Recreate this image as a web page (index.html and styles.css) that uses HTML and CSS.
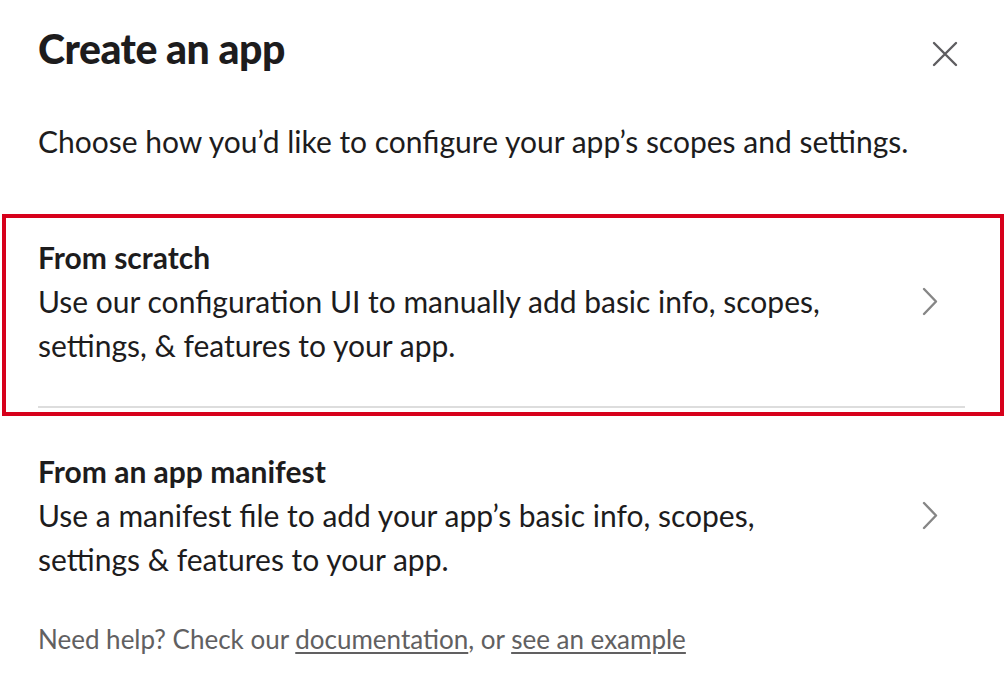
FILE: index.html
```html
<!DOCTYPE html>
<html lang="en">
<head>
<meta charset="utf-8">
<title>Create an app</title>
<link rel="stylesheet" href="styles.css">
</head>
<body>
<div class="modal">
  <header class="modal-header">
    <h1 class="modal-title">Create an app</h1>
    <button class="close-btn" aria-label="Close">
      <svg width="26" height="26" viewBox="0 0 26 26"><path d="M2 2 L24 24 M24 2 L2 24" fill="none" stroke="#5e5d60" stroke-width="2.4" stroke-linecap="round"/></svg>
    </button>
  </header>
  <p class="modal-intro">Choose how you’d like to configure your app’s scopes and settings.</p>

  <div class="option option-focused">
    <div class="option-row">
      <div class="option-text">
        <div class="option-title">From scratch</div>
        <div class="option-desc">Use our configuration UI to manually add basic info, scopes, settings, &amp; features to your app.</div>
      </div>
      <svg class="chevron" width="16" height="29" viewBox="0 0 16 29"><path d="M2 2 L14 14.5 L2 27" fill="none" stroke="#868686" stroke-width="2.4" stroke-linecap="round" stroke-linejoin="round"/></svg>
    </div>
    <div class="divider"></div>
  </div>

  <div class="option">
    <div class="option-row">
      <div class="option-text">
        <div class="option-title">From an app manifest</div>
        <div class="option-desc">Use a manifest file to add your app’s basic info, scopes, settings &amp; features to your app.</div>
      </div>
      <svg class="chevron" width="16" height="29" viewBox="0 0 16 29"><path d="M2 2 L14 14.5 L2 27" fill="none" stroke="#868686" stroke-width="2.4" stroke-linecap="round" stroke-linejoin="round"/></svg>
    </div>
  </div>

  <p class="modal-footer">Need help? Check our <a href="#">documentation</a>, or <a href="#">see an example</a></p>
</div>
</body>
</html>
```
FILE: styles.css
```css
* { box-sizing: border-box; }
html, body { margin: 0; padding: 0; background: #fff; }
body {
  font-family: Lato, "Noto Sans", sans-serif;
  color: #1d1c1d;
  width: 1004px;
  height: 686px;
  overflow: hidden;
}
.modal { padding-top: 24px; }
.modal-header {
  display: flex;
  align-items: center;
  justify-content: space-between;
  padding: 0 46px 0 38px;
}
.modal-title {
  margin: 0;
  font-size: 41px;
  line-height: 50px;
  font-weight: 900;
  letter-spacing: -0.5px;
}
.close-btn {
  border: 0;
  background: none;
  padding: 0;
  width: 26px;
  height: 26px;
  margin-top: 10px;
  display: flex;
}
.modal-intro {
  margin: 45px 0 0;
  padding: 0 39px 0 38px;
  font-size: 30px;
  line-height: 44px;
}
.option { padding: 33px 39px 39px 38px; }
.option-focused {
  margin: 51px 0 0 2px;
  border: 4px solid #d7001b;
  padding: 17px 35px 4px 32px;
}
.option-row {
  display: flex;
  align-items: center;
}
.option-text {
  flex: 1;
  padding-right: 70px;
}
.option-title {
  font-size: 30px;
  line-height: 44px;
  font-weight: 700;
}
.option-desc {
  font-size: 30px;
  line-height: 44px;
}
.chevron { margin-right: 27px; flex: none; }
.option-focused .divider {
  margin-top: 39px;
  height: 2px;
  background: #dddddd;
}
.modal-footer {
  margin: 1px 0 0;
  padding: 0 39px 0 38px;
  font-size: 26px;
  line-height: 36px;
  color: #616061;
}
.modal-footer a { color: #616061; text-decoration: underline; text-underline-offset: 3px; }
```
